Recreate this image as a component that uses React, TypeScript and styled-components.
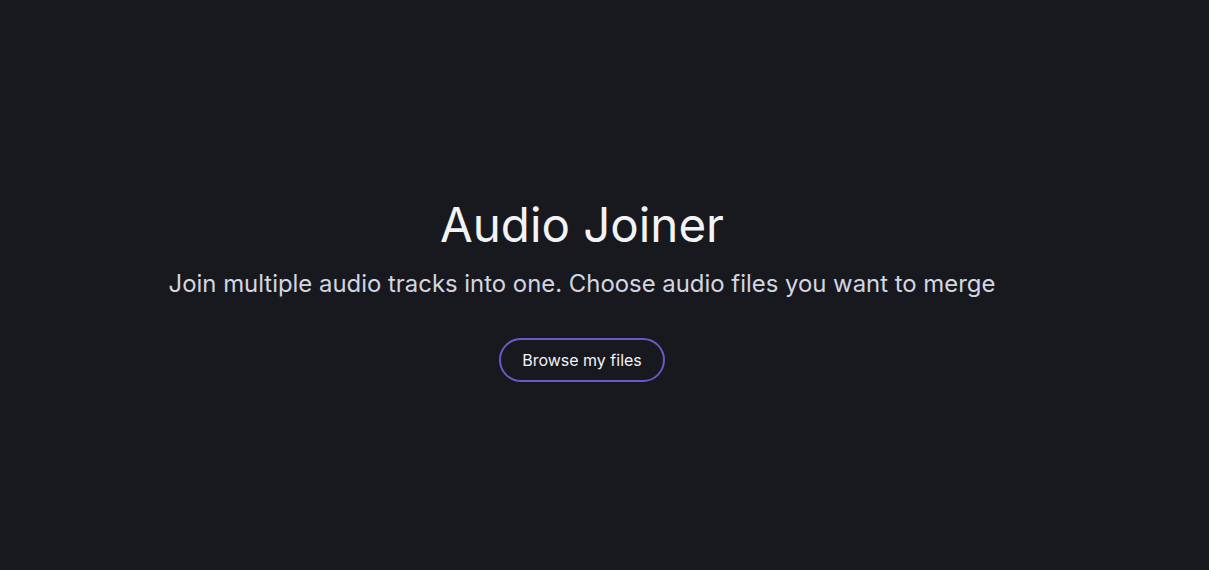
import React from 'react';
import styled, { createGlobalStyle } from 'styled-components';

const GlobalStyle = createGlobalStyle`
  html, body {
    margin: 0;
    padding: 0;
    background: #18191f;
  }
  body {
    font-family: Inter, "Noto Sans", sans-serif;
  }
`;

const Page = styled.main`
  min-height: 100vh;
  box-sizing: border-box;
  padding-right: 45px;
  display: flex;
  flex-direction: column;
  align-items: center;
  justify-content: center;
  background: #18191f;
`;

const Hero = styled.section`
  display: flex;
  flex-direction: column;
  align-items: center;
  margin-top: 8px;
`;

const Title = styled.h1`
  margin: 0;
  color: #f2f3f5;
  font-size: 47.5px;
  font-weight: 400;
  line-height: 1.2;
`;

const Subtitle = styled.p`
  margin: 14px 0 0;
  color: #d3d6e0;
  font-size: 23.9px;
  font-weight: 400;
  line-height: 1.4;
`;

const BrowseButton = styled.button`
  margin-top: 38px;
  height: 44px;
  padding: 0 21px;
  border: 2px solid #6a58c8;
  border-radius: 999px;
  background: transparent;
  color: #f2f3f5;
  font-family: inherit;
  font-size: 16px;
  cursor: pointer;
`;

export default function App() {
  return (
    <>
      <GlobalStyle />
      <Page>
        <Hero>
          <Title>Audio Joiner</Title>
          <Subtitle>Join multiple audio tracks into one. Choose audio files you want to merge</Subtitle>
          <BrowseButton>Browse my files</BrowseButton>
        </Hero>
      </Page>
    </>
  );
}
